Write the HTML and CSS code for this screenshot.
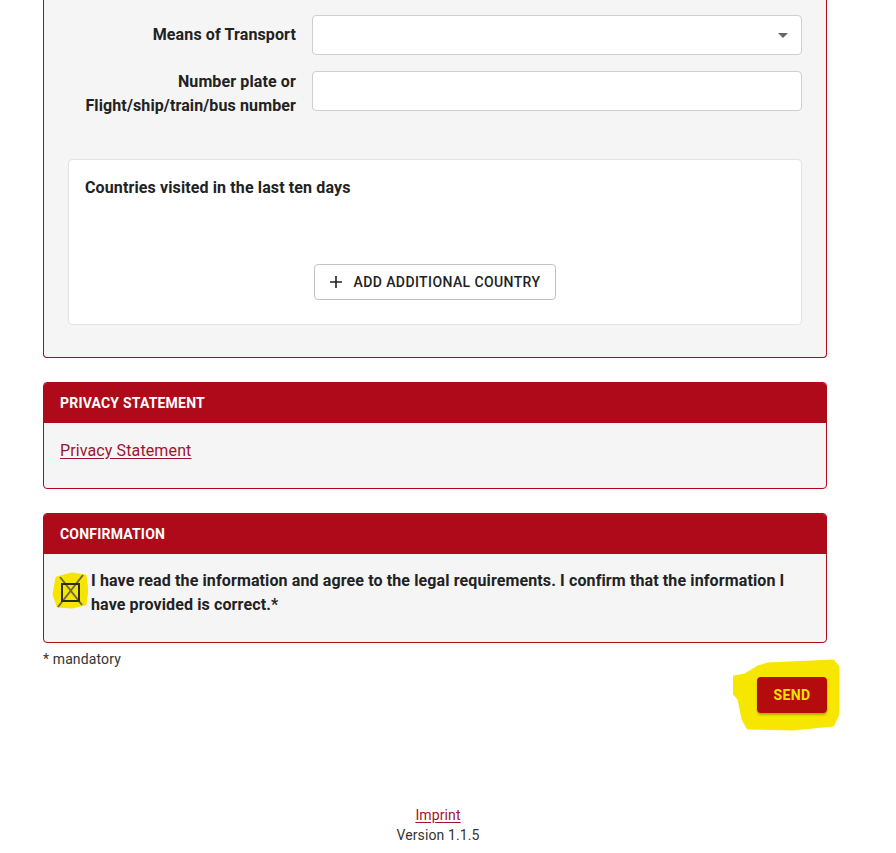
FILE: index.html
```html
<!DOCTYPE html>
<html lang="en">
<head>
<meta charset="utf-8">
<title>Form</title>
<link rel="stylesheet" href="styles.css">
</head>
<body>
<div class="page">
  <div class="container">
    <section class="card card-open">
      <div class="fields">
        <div class="row">
          <label class="label label-one">Means of Transport</label>
          <div class="select">
            <svg class="caret" width="10" height="5" viewBox="0 0 10 5"><path d="M0 0 H10 L5 5 Z" fill="#666"/></svg>
          </div>
        </div>
        <div class="row">
          <label class="label label-two">Number plate or<br>Flight/ship/train/bus number</label>
          <div class="input"></div>
        </div>
      </div>
      <div class="subcard">
        <div class="subtitle">Countries visited in the last ten days</div>
        <div class="subactions">
          <button class="outline-btn" type="button">
            <svg width="12" height="12" viewBox="0 0 12 12"><path d="M6 0 V12 M0 6 H12" stroke="#222" stroke-width="1.6"/></svg>
            <span>ADD ADDITIONAL COUNTRY</span>
          </button>
        </div>
      </div>
    </section>

    <section class="card">
      <div class="card-head">PRIVACY STATEMENT</div>
      <div class="card-body">
        <a class="link" href="#">Privacy Statement</a>
      </div>
    </section>

    <section class="card">
      <div class="card-head">CONFIRMATION</div>
      <div class="card-body confirm">
        <svg class="check" width="36" height="38" viewBox="0 0 36 38">
          <path d="M5 6 L20 2 L33 4 L35 18 L33 32 L20 35 L6 34 L2 22 Z" fill="#f6e500" stroke="#f6e500" stroke-width="3" stroke-linejoin="round"/>
          <line x1="31" y1="3" x2="6" y2="35" stroke="#6a6a48" stroke-width="2"/>
          <line x1="8" y1="5" x2="30" y2="33" stroke="#6a6a48" stroke-width="2"/>
          <rect x="10" y="12" width="17" height="17" fill="none" stroke="#2e2e14" stroke-width="2"/>
        </svg>
        <p class="confirm-text">I have read the information and agree to the legal requirements. I confirm that the information I have provided is correct.*</p>
      </div>
    </section>

    <div class="mandatory">* mandatory</div>

    <div class="actions">
      <span class="send-wrap">
        <svg class="highlight" width="107" height="72" viewBox="0 0 107 72">
          <path d="M35 5 L100 2 L105 8 L105 55 L100 66 L60 70 L15 69 L10 60 L6 40 L0 33 L1 18 L12 16 L25 8 Z" fill="#f7e600" stroke="#f7e600" stroke-width="3" stroke-linejoin="round"/>
        </svg>
        <button class="send" type="button">SEND</button>
      </span>
    </div>
  </div>

  <footer class="footer">
    <a class="link small" href="#">Imprint</a>
    <div class="version">Version 1.1.5</div>
  </footer>
</div>
</body>
</html>
```

FILE: styles.css
```css
* { box-sizing: border-box; }

body {
  margin: 0;
  background: #ffffff;
  font-family: Roboto, "Liberation Sans", Arial, sans-serif;
  color: #212121;
  letter-spacing: 0.12px;
}

.page {
  width: 876px;
}

.container {
  padding: 0 49px 0 43px;
}

.card {
  border: 1px solid #af0a19;
  border-radius: 4px;
  background: #f5f5f5;
  margin-bottom: 24px;
  overflow: hidden;
}

.card-open {
  border-top: 0;
  border-top-left-radius: 0;
  border-top-right-radius: 0;
  padding: 15px 24px 32px 24px;
}

.fields {
  display: flex;
  flex-direction: column;
  gap: 16px;
}

.row {
  display: flex;
  align-items: flex-start;
  gap: 16px;
}

.label {
  width: 228px;
  flex: none;
  text-align: right;
  font-size: 16px;
  font-weight: 700;
  line-height: 24px;
  color: #222;
}

.label-one { padding-top: 8px; }
.label-two { margin-top: -1px; }

.select,
.input {
  width: 490px;
  height: 40px;
  background: #fff;
  border: 1px solid #cfcfcf;
  border-radius: 4px;
  position: relative;
}

.caret {
  position: absolute;
  right: 13px;
  top: 17px;
}

.subcard {
  margin-top: 41px;
  background: #fff;
  border: 1px solid #e2e2e2;
  border-radius: 4px;
  padding: 16px 16px 24px 16px;
}

.subtitle {
  font-size: 16px;
  font-weight: 700;
  line-height: 24px;
  color: #222;
}

.subactions {
  margin-top: 64px;
  display: flex;
  justify-content: center;
}

.outline-btn {
  height: 36px;
  display: inline-flex;
  align-items: center;
  gap: 12px;
  padding: 0 15px 0 15px;
  background: #fff;
  border: 1px solid #c2c2c2;
  border-radius: 4px;
  font-family: Roboto, "Liberation Sans", Arial, sans-serif;
  font-size: 14px;
  font-weight: 500;
  letter-spacing: 0.4px;
  color: #222;
}

.card-head {
  height: 40px;
  background: #af0a19;
  color: #fff;
  font-size: 14px;
  font-weight: 700;
  line-height: 40px;
  padding: 0 16px;
  letter-spacing: 0.2px;
}

.card-body {
  padding: 16px 16px 25px 16px;
  font-size: 16px;
  line-height: 24px;
}

.link {
  color: #a0132b;
  text-decoration: underline;
  text-underline-offset: 2px;
}

.confirm {
  display: flex;
  align-items: flex-start;
  gap: 3px;
  padding-top: 15px;
}

.check {
  flex: none;
  margin-left: -8px;
  margin-top: 3px;
}

.confirm-text {
  margin: 0;
  font-weight: 700;
  color: #222;
}

.mandatory {
  margin-top: -18px;
  font-size: 14px;
  line-height: 20px;
  color: #333;
}

.actions {
  display: flex;
  justify-content: flex-end;
  margin-top: 8px;
}

.send-wrap {
  position: relative;
  display: inline-block;
}

.highlight {
  position: absolute;
  left: -24px;
  top: -18px;
}

.send {
  position: relative;
  width: 70px;
  height: 36px;
  border: 0;
  border-radius: 4px;
  background: #b40c0c;
  color: #f3e300;
  font-family: Roboto, "Liberation Sans", Arial, sans-serif;
  font-size: 14px;
  font-weight: 700;
  letter-spacing: 0.4px;
  box-shadow: 0 2px 2px rgba(120, 100, 0, 0.45);
  display: block;
}

.footer {
  margin-top: 92px;
  text-align: center;
  font-size: 14px;
  line-height: 20px;
}

.small {
  font-size: 14px;
}

.version {
  color: #333;
}
```
